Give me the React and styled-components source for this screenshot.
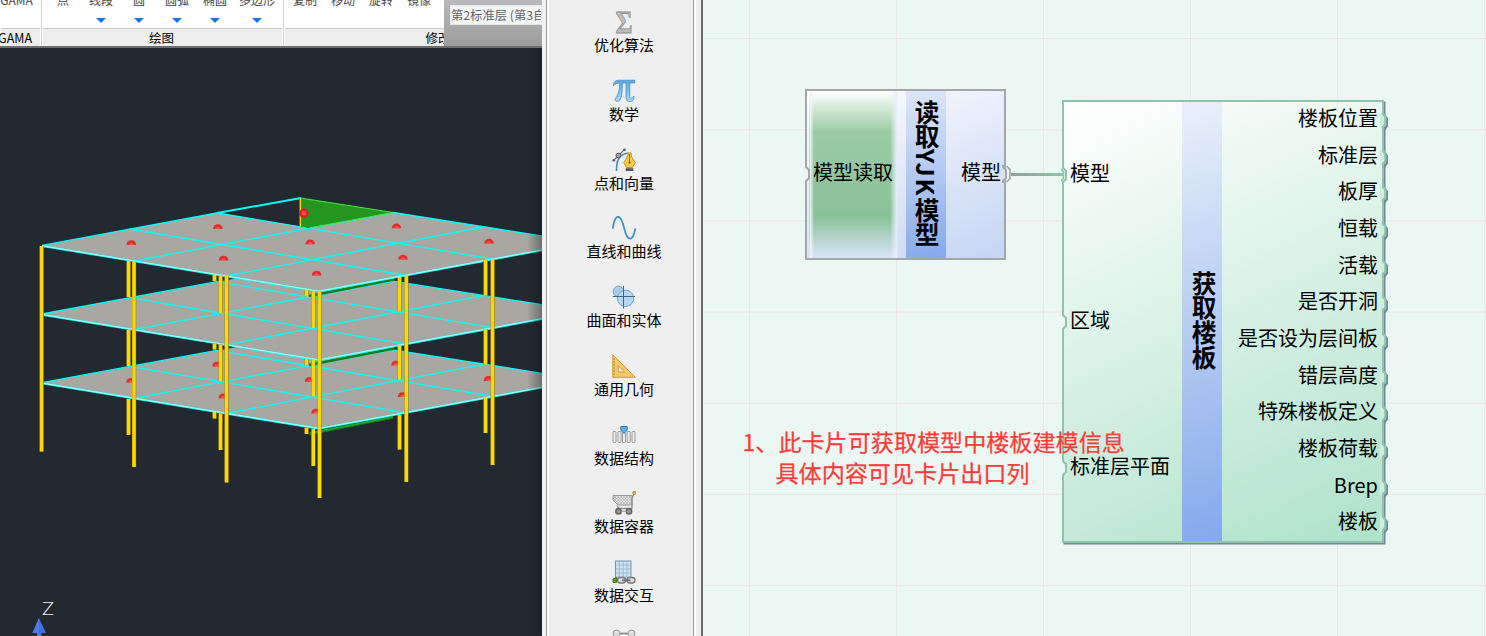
import React from "react";
import styled, { createGlobalStyle } from "styled-components";

const cjk = '"Noto Sans CJK SC", "Noto Sans", sans-serif';

const Global = createGlobalStyle`
  * { box-sizing: border-box; }
  body { margin: 0; overflow: hidden; font-family: ${cjk}; color: #000; }
  svg { display: block; }
`;

const Window = styled.div`
  display: flex;
  width: 1486px;
  height: 636px;
  overflow: hidden;
`;

/* ---------- CAD pane ---------- */
const CadPane = styled.section`
  width: 542px;
  display: flex;
  flex-direction: column;
  background: #222930;
  overflow: hidden;
`;
const TopBar = styled.div`
  display: flex;
  height: 48px;
  flex: none;
  background: linear-gradient(#b9b9b9, #9d9d9d);
  border-bottom: 2px solid #6c6d6d;
  overflow: hidden;
`;
const Ribbon = styled.div`
  display: flex;
  width: 444px;
  flex: none;
  background: #fff;
  overflow: hidden;
`;
const RibbonGroup = styled.div`
  width: ${(p) => p.$w}px;
  flex: none;
  display: flex;
  flex-direction: column;
  border-right: 1px solid #d2d2d2;
  padding: 0 1px;
  overflow: hidden;
`;
const Commands = styled.div`
  display: flex;
  height: 28px;
  padding-left: ${(p) => p.$pad}px;
`;
const Command = styled.div`
  width: ${(p) => p.$w}px;
  flex: none;
  display: flex;
  flex-direction: column;
  align-items: center;
  font-size: 12px;
  line-height: 16px;
  color: #444;
  white-space: nowrap;
  margin-top: -8px;
  gap: 10px;
`;
const Arrow = styled.i`
  border: 5px solid transparent;
  border-top-color: #1674e8;
  border-bottom: 0;
`;
const GroupTitle = styled.div`
  display: flex;
  justify-content: ${(p) => p.$align || "center"};
  height: 18px;
  background: #eee;
  border-top: 1px solid #c9c9c9;
  font-size: 12.5px;
  line-height: 18px;
  padding-right: ${(p) => p.$pr || 0}px;
  padding-left: ${(p) => p.$pl || 0}px;
  white-space: nowrap;
`;
const LayerBox = styled.div`
  margin: 5px 0 0 6px;
  width: 92px;
  height: 20px;
  background: #f4f5f6;
  border: 1px solid #e3e6ea;
  color: #666;
  font-size: 12.3px;
  line-height: 19px;
  padding-left: 0;
  white-space: nowrap;
  overflow: hidden;
`;

const Slab = ({ dy, hole }) => (
  <g transform={`translate(0 ${dy})`} fill="none" stroke="#00ffff" strokeWidth="1.3">
    <polygon
      stroke="none"
      fill="#a8a7a1"
      points={hole ? "42,245.5 217,213 309,228 393,212.5 545,236.5 545,249.5 319,291.5" : "42,245.5 300,198 545,236.5 545,249.5 319,291.5"}
    />
    <path d="M42 245.3 217 213 M393 212.5 545 236.5" />
    <path d="M129.5 229 406 275.5 M217 213 492.5 259 M134 261 393 212.5 M227 276 483 227" />
    <path d="M42 246 319 291.5 545 249.7" strokeWidth="2" />
    <path d="M42 245.8 319 291.2 545 249.4" stroke="#d5ffff" strokeWidth=".9" />
  </g>
);

const backColumns = [
  [128.5, 261, 297], [128.5, 330, 366], [128.5, 399, 435],
  [214.5, 275, 281], [214.5, 343.5, 349.5], [214.5, 412, 418.5],
  [220.5, 276, 313], [220.5, 344.5, 381], [220.5, 413.5, 450],
  [306.5, 290, 296.5], [306.5, 359, 365], [306.5, 428, 434],
  [313.3, 291, 328], [313.3, 360, 396.5], [313.3, 429, 466],
  [399.5, 277, 311.5], [399.5, 346, 380], [399.5, 415, 449.5],
  [485.5, 260, 295.5], [485.5, 329, 364.5], [485.5, 398, 433],
];
const frontColumns = [
  [41.5, 246, 451.5], [134, 261, 467], [226.5, 276, 482.5],
  [319.5, 291, 498], [406.3, 276, 482], [492.5, 259, 465],
];
const Column = ({ c: [x, a, b] }) => (
  <g>
    <rect x={x - 2} y={a} width="4.2" height={b - a} fill="#857b23" />
    <rect x={x - 1.7} y={a} width="3.4" height={b - a} fill="#ffd800" />
  </g>
);
const Dome = ({ x, y }) => (
  <g>
    <path d={`M${x - 4.8} ${y + 2.5}a4.8 4.8 0 0 1 9.6 0z`} fill="#e52c2a" />
    <path d={`M${x - 2.2} ${y + 2.5}a2.2 2.2 0 0 1 4.4 0z`} fill="#ff5450" />
  </g>
);
const topDomes = [[131.3, 242.5], [217.8, 226.5], [223.6, 258], [310.2, 241.8], [316.6, 273], [396.5, 225.8], [403, 257.1], [489, 241.1]];
const lowDomes = [[131, 380.2], [217, 364], [223.3, 395.7], [309.5, 379.3], [316, 411], [396, 363], [402.5, 394.5], [488.5, 378.4]];

const ZAxis = styled.text`
  font: 300 18px Lato, sans-serif;
  fill: #f2f2f2;
`;

const Model = () => (
  <svg width="542" height="588" viewBox="0 48 542 588">
    <defs>
      <linearGradient id="fade">
        <stop offset="0" stopColor="#11161b" stopOpacity="0" />
        <stop offset="1" stopColor="#11161b" stopOpacity=".38" />
      </linearGradient>
    </defs>
    <path d="M310 434 320 431.5 393 417.2" fill="none" stroke="#21a52a" strokeWidth="2.4" />
    <path d="M310 435 320 432.8 393 418.2" fill="none" stroke="#176d1c" strokeWidth=".8" />
    <Slab dy={137.3} />
    {lowDomes.map(([x, y]) => <Dome key={x} x={x} y={y} />)}
    <path d="M309 365 322 362.5 394 348.5" fill="none" stroke="#187c1b" strokeWidth="2.6" />
    <Slab dy={68.7} />
    <path d="M309 296 322 293.5 394 279.5" fill="none" stroke="#187c1b" strokeWidth="2.6" />
    <Slab dy={0} hole />
    <polygon points="300.5,198 393,212.5 309,228 300.5,226.5" fill="#249620" />
    <path d="M300.5 198 393 212.5 309 228" fill="none" stroke="#42e83c" strokeWidth="1.2" />
    <path d="M217 213 301 198" stroke="#00ffff" strokeWidth="2" />
    <path d="M300.3 198V226.5" stroke="#ffd800" strokeWidth="1.4" />
    <circle cx="304" cy="213.3" r="4.8" fill="#d52420" />
    <circle cx="304" cy="213.3" r="2.3" fill="#ff5450" />
    {topDomes.map(([x, y]) => <Dome key={x} x={x} y={y} />)}
    {backColumns.map((c, i) => <Column key={i} c={c} />)}
    {frontColumns.map((c, i) => <Column key={i} c={c} />)}
    <rect x="527" y="48" width="15" height="588" fill="url(#fade)" />
    <ZAxis x="42" y="615" textLength="12" lengthAdjust="spacingAndGlyphs">Z</ZAxis>
    <path d="M39 618 46 633H41.5V636H37V633H32.5z" fill="#4570dc" />
    <path d="M39 618V636H37V633H32.5z" fill="#4f7de8" />
  </svg>
);

/* ---------- tool palette ---------- */
const Palette = styled.nav`
  width: 161px;
  flex: none;
  display: flex;
  background: #efefef;
  border-left: 4px solid #f3f3f3;
  overflow: hidden;
`;
const PaletteList = styled.div`
  width: 148px;
  flex: none;
  border-left: 1px solid #9a9a9a;
  border-right: 1px solid #9a9a9a;
  box-shadow: inset 2px 0 #fafafa;
  padding: 10px 0 0 8px;
`;
const PaletteEdge = styled.div`
  flex: 1;
  background: linear-gradient(90deg, #fdfdfd 2px, #efefef 2px);
  border-right: 2px solid #6d6d6d;
`;
const Tool = styled.div`
  height: 68.75px;
  display: flex;
  flex-direction: column;
  align-items: center;
`;
const ToolLabel = styled.span`
  font-size: 15px;
  line-height: 22px;
  white-space: nowrap;
`;
const Glyph = styled.text`
  font: bold ${(p) => p.$size}px "Liberation Serif", serif;
`;

const Icon = ({ children }) => <svg width="24" height="24" viewBox="0 0 24 24">{children}</svg>;

const Sigma = () => (
  <Icon>
    <Glyph $size={32} x="3.5" y="23" textLength="17" lengthAdjust="spacingAndGlyphs" fill="#bdbdbd" stroke="#8e8e8e" strokeWidth=".8">Σ</Glyph>
  </Icon>
);
const Pi = () => (
  <Icon>
    <defs>
      <linearGradient id="pi" x2="0" y2="1"><stop stopColor="#5aa5dc" /><stop offset="1" stopColor="#a9d9f8" /></linearGradient>
    </defs>
    <path d="M1.2 7C2 2.5 3.5 1.2 7 1.2H22.8V4H17.8V17.5C17.8 20 20.5 20 22 17C22.3 21 20.5 22.6 18 22.6C15 22.6 14 21 14 18V4H10.5C10.3 11 10 16 8.5 20C7.3 23.2 2.8 23.2 3 20C5.5 17 7.5 12 7.8 4C4.5 4 3 4.8 1.2 7z" fill="url(#pi)" stroke="#458fc9" strokeWidth=".8" />
  </Icon>
);
const Pen = () => (
  <Icon>
    <path d="M4.5 23C4.5 13 6 7 16 5" fill="none" stroke="#3e91c6" strokeWidth="1.6" />
    <path d="M1.5 12.5 12.5 1.5" stroke="#777" strokeWidth="1.2" />
    <circle cx="6.3" cy="7.5" r="2.3" fill="#a4a4a4" stroke="#555" />
    <circle cx="1.8" cy="12.3" r="1.4" fill="#666" />
    <circle cx="12.5" cy="1.8" r="1.4" fill="#666" />
    <path d="M16 5H19C19 9 21 11.5 23.3 14.5L20.5 19.5H14.5L11.7 14.5C14 11.5 16 9 16 5z" fill="#f9cf48" stroke="#ca8c18" />
    <path d="M17.5 6V14" stroke="#8f6614" strokeWidth=".9" />
    <circle cx="17.5" cy="14.5" r="1.2" fill="#9a6412" />
    <path d="M13.7 20.2H21.3V23H13.7z" fill="#565656" />
  </Icon>
);
const Wave = () => (
  <Icon>
    <path d="M.8 12.5C3-3 8.5-3 12 11.5C15.5 26.5 21 26 23.3 12.5" fill="none" stroke="#3f93ca" strokeWidth="1.8" />
  </Icon>
);
const Surface = () => (
  <Icon>
    <circle cx="6.5" cy="6.5" r="5.4" fill="#a4cdee" stroke="#6ba5d2" />
    <circle cx="13.5" cy="13.3" r="8.2" fill="#b4d8f3" stroke="#6ba5d2" />
    <path d="M11.5.8V23.5M.8 11.5H23" stroke="#4a6376" strokeWidth="1" />
  </Icon>
);
const Triangle = () => (
  <Icon>
    <path d="M.8.8 23.4 23.3H.8zM6.2 11.8V18H12.5z" fill="#f3c968" fillRule="evenodd" stroke="#d29a35" />
    <path d="M1.5 5H3M1.5 8H3M1.5 11H3M1.5 14H3M1.5 17H3M1.5 20H3" stroke="#ad7516" />
  </Icon>
);
const Bars = () => (
  <Icon>
    {[1, 6, 10.5, 15.2, 20].map((x) => <rect key={x} x={x} y="8.5" width="3" height="11" rx=".7" fill="#ededed" stroke="#9b9b9b" />)}
    <path d="M8.8 3.5H15.2V7L12 10.5 8.8 7z" fill="#5eadec" stroke="#2878b6" />
  </Icon>
);
const Cart = () => (
  <Icon>
    <defs>
      <pattern id="mesh" width="3" height="3" patternUnits="userSpaceOnUse"><rect width="3" height="3" fill="#e4e4e4" /><path d="M0 0 3 3M3 0 0 3" stroke="#aaa" strokeWidth=".6" /></pattern>
    </defs>
    <path d="M1 4.5H20V14H6L1 9z" fill="url(#mesh)" stroke="#999" />
    <path d="M22 3 20 7V17.5H7L5 14.5" fill="none" stroke="#909090" strokeWidth="1.3" />
    <circle cx="22.3" cy="1.8" r="1.7" fill="#e2a243" stroke="#b57622" strokeWidth=".5" />
    {[6.5, 17].map((x) => <circle key={x} cx={x} cy="20.3" r="2.7" fill="#999" stroke="#666" strokeWidth="1.6" />)}
    <path d="M9 20.3H14.5" stroke="#999" />
  </Icon>
);
const Sheet = () => (
  <Icon>
    <rect x="3.5" y="1" width="15.5" height="20" fill="#cde2f2" stroke="#7792a9" />
    <path d="M7.3 1V20M11.2 1V20M15 1V20M3.5 5H19M3.5 9H19M3.5 13H19M3.5 17H19" stroke="#8eabc2" strokeWidth=".7" />
    <path d="M1 22.5V19L4.5 17.5V22.5z" fill="#5b9e2e" stroke="#41761e" />
    <g fill="#dedede" stroke="#777" strokeWidth="1.3"><rect x="5.5" y="17.5" width="8" height="5.5" rx="2.7" /><rect x="15" y="17.5" width="8" height="5.5" rx="2.7" /><path d="M10 20.3H18.5" strokeWidth="2" /></g>
  </Icon>
);
const Network = () => (
  <Icon>
    <path d="M4 4.5H20" fill="none" stroke="#888" strokeWidth="1.6" />
    <circle cx="4.5" cy="4.5" r="3.5" fill="#dedede" stroke="#999" />
    <circle cx="19.5" cy="4.5" r="3.5" fill="#dedede" stroke="#999" />
  </Icon>
);

const tools = [
  ["优化算法", Sigma], ["数学", Pi], ["点和向量", Pen], ["直线和曲线", Wave], ["曲面和实体", Surface],
  ["通用几何", Triangle], ["数据结构", Bars], ["数据容器", Cart], ["数据交互", Sheet], [null, Network],
];

/* ---------- node canvas ---------- */
const Canvas = styled.main`
  position: relative;
  flex: 1;
  background-color: #eaf7f3;
  background-image: linear-gradient(90deg, #efe6e6 1px, transparent 1px), linear-gradient(#efe6e6 1px, transparent 1px);
  background-size: 147px 91.2px;
  background-position: 46px 38px;
  overflow: hidden;
`;
const Node = styled.article`
  position: absolute;
  left: ${(p) => p.$x}px;
  top: ${(p) => p.$y}px;
  width: ${(p) => p.$w}px;
  height: ${(p) => p.$h}px;
  display: flex;
  border: 2px solid ${(p) => p.$line};
  background: ${(p) => p.$bg};
  box-shadow: ${(p) => p.$shadow || "none"};
  font-size: 20px;
`;
const Ports = styled.div`
  width: ${(p) => p.$w}px;
  flex: none;
  display: flex;
  flex-direction: column;
  margin-bottom: ${(p) => p.$mb || 0}px;
`;
const Port = styled.div`
  position: relative;
  flex: 1;
  display: flex;
  align-items: center;
  justify-content: ${(p) => (p.$out ? "flex-end" : "flex-start")};
  padding: 0 ${(p) => (p.$out ? p.$pad : 0)}px 4px ${(p) => (p.$out ? 0 : p.$pad)}px;
  line-height: 24px;
  white-space: nowrap;
`;
const Notch = styled.svg`
  position: absolute;
  top: calc(50% - 9px + ${(p) => p.$dy || 0}px);
  ${(p) => (p.$out ? "right" : "left")}: ${(p) => p.$edge}px;
`;
const Title = styled.h2`
  margin: 0;
  width: 40px;
  flex: none;
  display: flex;
  align-items: center;
  justify-content: center;
  writing-mode: vertical-rl;
  padding: 0 0 ${(p) => p.$lift || 0}px ${(p) => p.$shift}px;
  font-size: 24.7px;
  line-height: 36px;
  font-weight: 700;
  white-space: nowrap;
  background: linear-gradient(165deg, ${(p) => p.$from}, #84a9eb);
`;
const Latin = styled.span`
  letter-spacing: 2px;
`;
const ReaderInput = styled.div`
  width: 99px;
  flex: none;
  display: flex;
  padding-left: 4px;
  background: linear-gradient(90deg, transparent 2px, #f0f4fc 3px, transparent 7px, transparent 83px, #e9effb 90px, transparent 91px),
    linear-gradient(#fff, #9bcba4 24%, #8ac099 75%, #d5e3f5 99%) 2px 0 / 88px 100% no-repeat;
`;
const Wire = styled.div`
  position: absolute;
  left: 308px;
  top: 172.5px;
  width: 53px;
  height: 3px;
  background: linear-gradient(90deg, #999f9d, #8cc7ad);
`;
const Note = styled.p`
  position: absolute;
  left: 39.5px;
  top: 426px;
  margin: 0;
  font-size: 23.1px;
  line-height: 31px;
  color: #fb3d3b;
  -webkit-text-stroke: 0.25px #fb3d3b;
  white-space: nowrap;
`;
const NoteLine = styled.span`
  display: block;
  padding-left: ${(p) => p.$indent || 0}px;
`;

const GREEN = "#8cc5ac";
const GRAY = "#a6a6a8";

const InNotch = ({ color, linked, edge = -3 }) => (
  <Notch $edge={edge} width="9" height="18">
    <path d="M0 1H1.5L5 5V13L1.5 17H0z" fill="#eaf7f3" />
    <path d="M2 0V2L5 5V13L2 16V18" fill="none" stroke={color} strokeWidth="2" />
    {linked && <path d="M0 3 2.5 6V12L0 15" fill="none" stroke={color} strokeWidth="1.6" />}
  </Notch>
);
const OutNotch = ({ fill }) => (
  <Notch $out $edge={-7} $dy={1} width="9" height="20">
    <path d="M4.5 3.5 7 6.5V14.5L4 18" fill="none" stroke="#75889a" strokeWidth="2" />
    <path d="M0 1H2L5.2 4.5V12.5L2 16H0z" fill={fill} />
    <path d="M3 0V2L5.3 4.5V12.5L3 15V17.5" fill="none" stroke={GREEN} strokeWidth="2.2" />
  </Notch>
);
const LinkedOutNotch = () => (
  <Notch $out $edge={-8} width="10" height="18">
    <path d="M0 1H2L4.5 4.5V13.5L2 17H0z" fill="#d9e2f7" />
    <path d="M1 0V2L4 5V13L1 16V18" fill="none" stroke={GRAY} strokeWidth="2" />
    <path d="M4.5 1 8 4.5V13.5L4.5 17" fill="none" stroke={GRAY} strokeWidth="1.7" />
  </Notch>
);

const outputs = ["楼板位置", "标准层", "板厚", "恒载", "活载", "是否开洞", "是否设为层间板", "错层高度", "特殊楼板定义", "楼板荷载", "Brep", "楼板"];

export default function App() {
  return (
    <Window>
      <Global />
      <CadPane>
        <TopBar>
          <Ribbon>
            <RibbonGroup $w={42}>
              <Commands $pad={0}><Command $w={31}>GAMA</Command></Commands>
              <GroupTitle $align="flex-end" $pr={8}>GAMA</GroupTitle>
            </RibbonGroup>
            <RibbonGroup $w={242}>
              <Commands $pad={1}>
                <Command $w={38}>点</Command>
                {["线段", "圆", "圆弧", "椭圆"].map((t) => <Command key={t} $w={38}>{t}<Arrow /></Command>)}
                <Command $w={46}>多边形<Arrow /></Command>
              </Commands>
              <GroupTitle $pr={2}>绘图</GroupTitle>
            </RibbonGroup>
            <RibbonGroup $w={300}>
              <Commands $pad={1}>
                {["复制", "移动", "旋转", "镜像"].map((t) => <Command key={t} $w={38}>{t}</Command>)}
              </Commands>
              <GroupTitle $pl={9}>修改</GroupTitle>
            </RibbonGroup>
          </Ribbon>
          <LayerBox>第2标准层 (第3自然层)</LayerBox>
        </TopBar>
        <Model />
      </CadPane>

      <Palette>
        <PaletteList>
          {tools.map(([label, Art], i) => (
            <Tool key={i}>
              <Art />
              {label && <ToolLabel>{label}</ToolLabel>}
            </Tool>
          ))}
        </PaletteList>
        <PaletteEdge />
      </Palette>

      <Canvas>
        <Node $x={102} $y={89} $w={201} $h={170.5} $line={GRAY} $bg="linear-gradient(155deg, #fff, #eaeffb 35%, #c5d5f3)">
          <ReaderInput>
            <Ports $w={94}>
              <Port $pad={2}>模型读取<InNotch color={GRAY} edge={-7} /></Port>
            </Ports>
          </ReaderInput>
          <Title $from="#dfe7f9" $lift={2} $shift={2}>读取<Latin>YJK</Latin>模型</Title>
          <Ports $w={58}>
            <Port $out $pad={3}>模型<LinkedOutNotch /></Port>
          </Ports>
        </Node>
        <Node $x={359} $y={99.5} $w={322} $h={443} $line={GREEN} $shadow="1.5px 1.5px 0 #75889a" $bg="linear-gradient(155deg, #fff, #dbf2e7 45%, #aee2cb)">
          <Ports $w={118} $mb={-1}>
            {["模型", "区域", "标准层平面"].map((t, i) => (
              <Port key={t} $pad={6}>{t}<InNotch color={GREEN} linked={i === 0} /></Port>
            ))}
          </Ports>
          <Title $from="#e9f0fa" $lift={2} $shift={4}>获取楼板</Title>
          <Ports $w={160} $mb={-1.2}>
            {outputs.map((t) => <Port key={t} $out $pad={4}>{t}<OutNotch fill="#d0eee0" /></Port>)}
          </Ports>
        </Node>
        <Wire />
        <Note>
          <NoteLine>1、此卡片可获取模型中楼板建模信息</NoteLine>
          <NoteLine $indent={33}>具体内容可见卡片出口列</NoteLine>
        </Note>
      </Canvas>
    </Window>
  );
}
